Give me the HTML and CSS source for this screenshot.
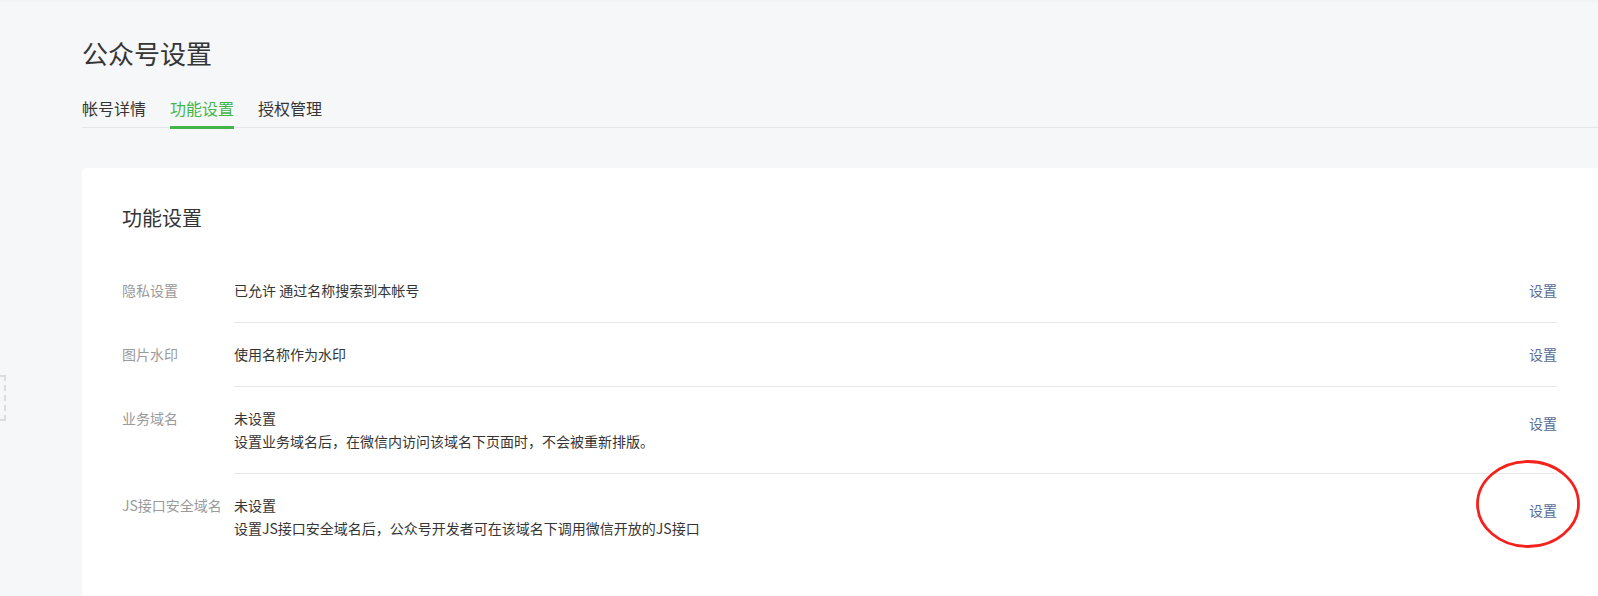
FILE: index.html
```html
<!DOCTYPE html>
<html lang="zh-CN">
<head>
<meta charset="utf-8">
<title>公众号设置</title>
<link rel="stylesheet" href="styles.css">
</head>
<body>
<div class="side-toggle"></div>
<main class="page">
  <h1 class="page-title">公众号设置</h1>
  <nav class="tabs">
    <a class="tab">帐号详情</a>
    <a class="tab tab--active">功能设置</a>
    <a class="tab">授权管理</a>
  </nav>
  <section class="card">
    <h2 class="card-title">功能设置</h2>
    <div class="rows">
      <div class="row">
        <div class="row-label">隐私设置</div>
        <div class="row-body">
          <div class="row-content"><p class="line">已允许 通过名称搜索到本帐号</p></div>
          <a class="row-link">设置</a>
        </div>
      </div>
      <div class="row">
        <div class="row-label">图片水印</div>
        <div class="row-body">
          <div class="row-content"><p class="line">使用名称作为水印</p></div>
          <a class="row-link">设置</a>
        </div>
      </div>
      <div class="row row--tall">
        <div class="row-label">业务域名</div>
        <div class="row-body">
          <div class="row-content">
            <p class="line">未设置</p>
            <p class="line">设置业务域名后，在微信内访问该域名下页面时，不会被重新排版。</p>
          </div>
          <a class="row-link">设置</a>
        </div>
      </div>
      <div class="row row--tall row--last">
        <div class="row-label">JS接口安全域名</div>
        <div class="row-body">
          <div class="row-content">
            <p class="line">未设置</p>
            <p class="line">设置JS接口安全域名后，公众号开发者可在该域名下调用微信开放的JS接口</p>
          </div>
          <a class="row-link">设置</a>
        </div>
      </div>
    </div>
  </section>
</main>
<svg class="annotation" width="110" height="94" viewBox="0 0 110 94" aria-hidden="true">
  <ellipse cx="55" cy="47" rx="50.5" ry="42.5" fill="none" stroke="#f5211c" stroke-width="2.8"/>
</svg>
</body>
</html>
```

FILE: styles.css
```css
* {
  box-sizing: border-box;
}

html, body {
  margin: 0;
  padding: 0;
}

body {
  width: 1598px;
  min-height: 596px;
  overflow: hidden;
  position: relative;
  background: linear-gradient(to bottom, #eef0f2 0, #f6f7f9 3px) #f6f7f9;
  font-family: "Noto Sans CJK SC", "Noto Sans", "Liberation Sans", sans-serif;
  color: #353535;
}

.page {
  padding: 35px 0 0 82px;
}

.page-title {
  margin: 0;
  font-size: 26px;
  line-height: 36px;
  font-weight: 400;
  color: #353535;
  padding-left: 0;
}

.tabs {
  display: flex;
  margin-top: 24px;
  border-bottom: 1px solid #e4e6e9;
  height: 33px;
}

.tab {
  display: block;
  font-size: 16px;
  line-height: 24px;
  padding-top: 1px;
  height: 34px;
  margin-right: 24px;
  color: #353535;
  border-bottom: 3px solid transparent;
}

.tab--active {
  color: #44b549;
  border-bottom-color: #44b549;
}

.card {
  margin-top: 40px;
  background: #ffffff;
  border-radius: 4px 0 0 4px;
  padding: 36px 41px 37px 40px;
}

.card-title {
  margin: 0 0 27px;
  font-size: 20px;
  line-height: 28px;
  font-weight: 400;
  color: #353535;
}

.row {
  display: flex;
  font-size: 14px;
  line-height: 23px;
}

.row-label {
  width: 112px;
  flex: none;
  padding: 20px 0;
  color: #9a9a9a;
  white-space: nowrap;
}

.row-body {
  flex: 1;
  display: flex;
  align-items: flex-start;
  padding: 20px 0;
  border-bottom: 1px solid #e7e7eb;
}

.row--last .row-body {
  border-bottom: none;
}

.row-content {
  flex: 1;
}

.line {
  margin: 0;
  color: #353535;
}

.row-link {
  display: block;
  color: #576b95;
  cursor: pointer;
}

.row--tall .row-link {
  margin-top: 5px;
}

.side-toggle {
  position: absolute;
  left: -40px;
  top: 375px;
  width: 46px;
  height: 46px;
  border: 2px dashed #dadcdf;
}

.annotation {
  position: absolute;
  left: 1473px;
  top: 457px;
}
```
